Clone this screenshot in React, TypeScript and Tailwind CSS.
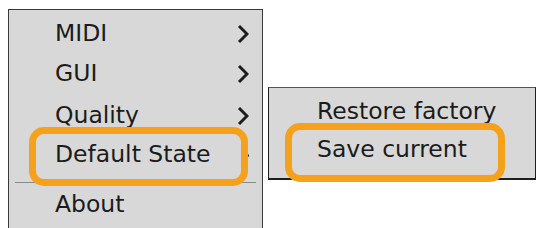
import React from 'react';

const Chevron = () => (
  <svg width="12" height="22" viewBox="0 0 12 22" className="shrink-0">
    <polyline points="2,3 10,11 2,19" fill="none" stroke="#1c1c1c" strokeWidth="3" strokeLinejoin="miter" />
  </svg>
);

const Highlight = ({ className }: { className: string }) => (
  <div className={`pointer-events-none absolute rounded-[15px] border-[7px] border-[#f6a11c] ${className}`} />
);

export default function App() {
  const items = [
    { label: 'MIDI', h: 'h-[40px]' },
    { label: 'GUI', h: 'h-[40px]' },
    { label: 'Quality', h: 'h-[44px]' },
  ];

  return (
    <div
      className="w-[540px] h-[228px] overflow-hidden bg-white flex items-start gap-[5px] pl-[8px] pt-[9px] text-[#1b1b1b] text-[23.5px] leading-none"
      style={{ fontFamily: '"DejaVu Sans", "Liberation Sans", sans-serif' }}
    >
      {/* Main menu */}
      <div className="w-[255px] h-[230px] shrink-0 bg-[#d8d8d8] border border-[#3a3a3a] pt-[4px]">
        {items.map((it) => (
          <div key={it.label} className={`${it.h} flex items-center pl-[46px] pr-[13px]`}>
            <span>{it.label}</span>
            <span className="ml-auto">
              <Chevron />
            </span>
          </div>
        ))}

        {/* Default State */}
        <div className="relative h-[34px] flex items-center pl-[46px] pr-[12px]">
          <span>Default State</span>
          <span className="ml-auto w-[3px] h-[3px] rounded-full bg-[#1c1c1c] mr-[1px]" />
          <Highlight className="left-[20px] -top-[11px] w-[219px] h-[59px]" />
        </div>

        <div className="mt-[10px] mx-[6px] h-px bg-[#8a8a8a]" />

        <div className="h-[44px] flex items-center pl-[46px]">
          <span>About</span>
        </div>
      </div>

      {/* Sub menu */}
      <div className="mt-[78px] w-[268px] h-[93px] shrink-0 bg-[#d8d8d8] border border-[#1e1e1e] border-t-[#555] border-b-2 pt-[5px]">
        <div className="h-[38px] flex items-center pl-[48px]">
          <span>Restore factory</span>
        </div>
        <div className="relative h-[38px] flex items-center pl-[48px]">
          <span>Save current</span>
          <Highlight className="left-[16px] -top-[8px] w-[220px] h-[59px]" />
        </div>
      </div>
    </div>
  );
}
